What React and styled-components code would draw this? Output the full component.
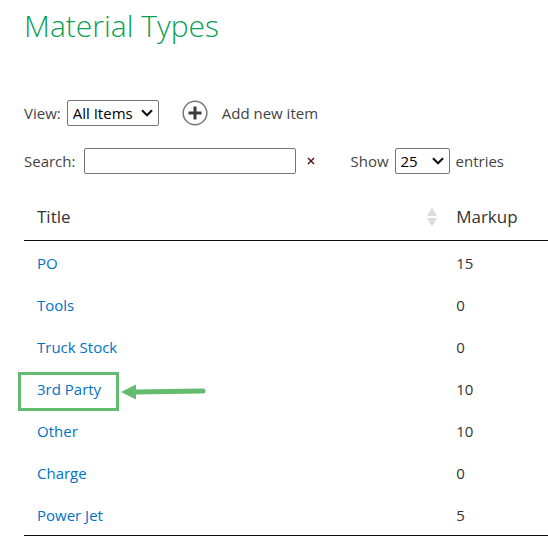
import React from 'react';
import styled, { createGlobalStyle } from 'styled-components';

const GlobalStyle = createGlobalStyle`
  body {
    margin: 0;
    background: #fff;
    color: #444;
    font-family: "Segoe UI", "Open Sans", "Noto Sans", sans-serif;
    font-size: 15px;
    line-height: 20px;
  }
`;

const Page = styled.main`
  padding: 4px 0 11px 24px;
`;

const Heading = styled.h1`
  margin: 0;
  color: #0a9f54;
  font-size: 30px;
  font-weight: 300;
  line-height: 44px;
`;

const Toolbar = styled.div`
  align-items: center;
  display: flex;
  height: 26px;
  margin-top: ${({ $top }) => $top}px;
`;

const Field = styled.div`
  align-items: center;
  display: flex;
  gap: 6px;
  margin-left: ${({ $left }) => $left || 0}px;
`;

const SelectWrap = styled.div`
  display: flex;
  position: relative;
`;

const Select = styled.select`
  appearance: none;
  background: #fff;
  border: 1px solid #767676;
  border-radius: 2px;
  color: #000;
  font: inherit;
  height: 26px;
  padding: 0 ${({ $right }) => $right}px 0 5px;
`;

const Chevron = styled.svg`
  pointer-events: none;
  position: absolute;
  right: 6px;
  top: 9px;
`;

const SearchInput = styled.input`
  border: 1px solid #767676;
  border-radius: 2px;
  box-sizing: border-box;
  font: inherit;
  height: 26px;
  margin-left: 3px;
  width: 212px;
`;

const PlainButton = styled.button`
  align-items: center;
  background: none;
  border: 0;
  color: #444;
  cursor: pointer;
  display: flex;
  font: inherit;
  gap: 14px;
  margin-left: ${({ $left }) => $left}px;
  padding: 0;
`;

const Table = styled.table`
  border-bottom: 1px solid #111;
  border-collapse: separate;
  border-spacing: 0;
  margin-top: 20px;
  table-layout: fixed;
  width: 100%;
`;

const HeadCell = styled.th`
  border-bottom: 1px solid #111;
  box-sizing: border-box;
  color: #333;
  font-size: 17px;
  font-weight: 400;
  line-height: 24px;
  padding: 11px 6px 11px 13px;
  text-align: left;
  width: ${({ $width }) => $width || 'auto'};
`;

const HeadContent = styled.div`
  align-items: center;
  display: flex;
  justify-content: space-between;
`;

const Cell = styled.td`
  color: #333;
  padding: 12px 6px 10px 13px;
`;

const ItemLink = styled.a`
  color: #0072c6;
  position: relative;
  text-decoration: none;
`;

const Callout = styled.span`
  border: 3px solid #62bb6f;
  height: 33px;
  left: -19px;
  pointer-events: none;
  position: absolute;
  top: -7px;
  width: 95px;
`;

const Arrow = styled.svg`
  left: 100px;
  position: absolute;
  top: 9px;
`;

const items = [
  { title: 'PO', markup: 15 },
  { title: 'Tools', markup: 0 },
  { title: 'Truck Stock', markup: 0 },
  { title: '3rd Party', markup: 10, highlighted: true },
  { title: 'Other', markup: 10 },
  { title: 'Charge', markup: 0 },
  { title: 'Power Jet', markup: 5 },
];

const Dropdown = ({ id, options, right, value }) => (
  <SelectWrap>
    <Select id={id} $right={right} defaultValue={value}>
      {options.map((option) => <option key={option}>{option}</option>)}
    </Select>
    <Chevron width="12" height="8" viewBox="0 0 12 8" aria-hidden="true">
      <path d="M1 1.2 6 6.2 11 1.2" fill="none" stroke="#111" strokeWidth="2.2" />
    </Chevron>
  </SelectWrap>
);

const AddIcon = () => (
  <svg width="26" height="26" viewBox="0 0 26 26" aria-hidden="true">
    <circle cx="13" cy="13" r="11.8" fill="none" stroke="#777" strokeWidth="1.5" />
    <path d="M13 6.5v13M6.5 13h13" stroke="#3c3c3c" strokeWidth="3" />
  </svg>
);

const SortIcon = () => (
  <svg width="10" height="20" viewBox="0 0 10 20" aria-hidden="true">
    <path d="M5 .5 10 9H0ZM0 11h10l-5 8.5Z" fill="#dcdcdc" />
  </svg>
);

const App = () => (
  <>
    <GlobalStyle />
    <Page>
      <Heading>Material Types</Heading>

      <Toolbar $top={52}>
        <Field>
          <label htmlFor="view">View:</label>
          <Dropdown id="view" options={['All Items']} value="All Items" right={25} />
        </Field>
        <PlainButton type="button" $left={23}>
          <AddIcon />
          Add new item
        </PlainButton>
      </Toolbar>

      <Toolbar $top={22}>
        <Field>
          <label htmlFor="search">Search:</label>
          <SearchInput id="search" type="text" />
        </Field>
        <PlainButton type="button" $left={11} aria-label="Clear search">
          <svg width="8" height="8" viewBox="0 0 8 8" aria-hidden="true">
            <path d="m1 1 6 6M7 1 1 7" stroke="#511" strokeWidth="1.4" />
          </svg>
        </PlainButton>
        <Field $left={35}>
          <label htmlFor="entries">Show</label>
          <Dropdown id="entries" options={['10', '25', '50', '100']} value="25" right={22} />
          <span>entries</span>
        </Field>
      </Toolbar>

      <Table>
        <thead>
          <tr>
            <HeadCell $width="80%">
              <HeadContent>
                Title
                <SortIcon />
              </HeadContent>
            </HeadCell>
            <HeadCell>Markup</HeadCell>
          </tr>
        </thead>
        <tbody>
          {items.map(({ title, markup, highlighted }) => (
            <tr key={title}>
              <Cell>
                <ItemLink href="#">
                  {title}
                  {highlighted && (
                    <Callout>
                      <Arrow width="86" height="16" viewBox="0 0 86 16" aria-hidden="true">
                        <path d="M0 8 15 .5v15Z" fill="#62bb6f" />
                        <path d="M14 8 82 7" stroke="#62bb6f" strokeWidth="5" strokeLinecap="round" />
                      </Arrow>
                    </Callout>
                  )}
                </ItemLink>
              </Cell>
              <Cell>{markup}</Cell>
            </tr>
          ))}
        </tbody>
      </Table>
    </Page>
  </>
);

export default App;
